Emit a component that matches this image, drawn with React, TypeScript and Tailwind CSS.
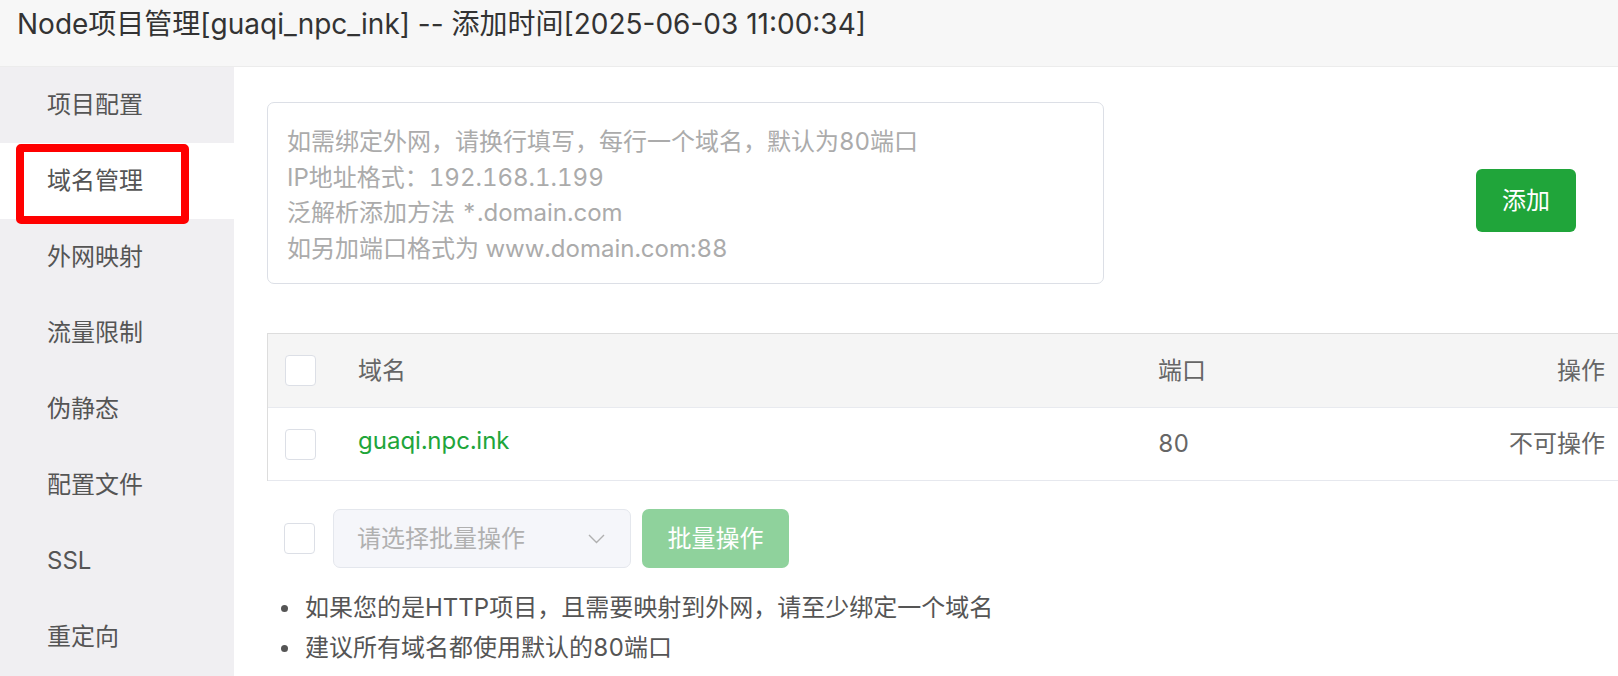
const NAV_ITEMS = ['项目配置', '域名管理', '外网映射', '流量限制', '伪静态', '配置文件', 'SSL', '重定向'];

const PLACEHOLDER = [
  '如需绑定外网，请换行填写，每行一个域名，默认为80端口',
  'IP地址格式：192.168.1.199',
  '泛解析添加方法 *.domain.com',
  '如另加端口格式为 www.domain.com:88',
].join('\n');

function Checkbox() {
  return <span className="block h-[31px] w-[31px] shrink-0 rounded-[4px] border border-[#dcdfe6] bg-white" />;
}

export default function App() {
  const active = 1;

  return (
    <div className="relative h-[676px] w-[1618px] overflow-hidden bg-white font-['Inter','Noto_Sans_CJK_SC',sans-serif] tabular-nums">
      {/* title bar */}
      <div className="h-[67px] border-b border-[#ececec] bg-[#f7f7f7] pl-[17px] pt-[6px] text-[28px] leading-[36px] text-[#333] normal-nums">
        Node项目管理[guaqi_npc_ink] -- 添加时间[2025-06-03 11:00:34]
      </div>

      <div className="flex h-[609px]">
        {/* side nav */}
        <div className="w-[234px] shrink-0 bg-[#f0eff2]">
          {NAV_ITEMS.map((item, i) => (
            <div
              key={item}
              className={
                i === active
                  ? 'flex h-[76px] items-center bg-white pl-[47px] text-[24px] text-[#555]'
                  : 'flex h-[76px] items-center pl-[47px] text-[24px] text-[#555]'
              }
            >
              {item}
            </div>
          ))}
        </div>

        {/* domain panel */}
        <div className="min-w-0 flex-1 overflow-hidden pl-[33px] pt-[35px]">
          <div className="flex items-start">
            <textarea
              className="h-[182px] w-[837px] resize-none rounded-[7px] border border-[#dcdfe6] bg-white pl-[19px] pt-[21px] text-[24px] leading-[35.5px] text-[#333] tabular-nums outline-none placeholder:text-[#ababab]"
              placeholder={PLACEHOLDER}
            />
            <button className="ml-auto mr-[42px] mt-[67px] h-[63px] w-[100px] rounded-[6px] bg-[#20a53a] text-[24px] text-white">
              添加
            </button>
          </div>

          {/* domain table */}
          <div className="mt-[49px] border-l border-t border-[#dddddd] text-[24px] text-[#666]">
            <div className="flex h-[74px] items-center border-b border-[#e8eaef] bg-[#f5f5f5]">
              <div className="w-[90px] pl-[17px]">
                <Checkbox />
              </div>
              <div className="w-[800px]">域名</div>
              <div className="w-[200px]">端口</div>
              <div className="flex-1 pr-[13px] text-right">操作</div>
            </div>
            <div className="flex h-[73px] items-center border-b border-[#e6e8ee]">
              <div className="w-[90px] pl-[17px]">
                <Checkbox />
              </div>
              <div className="-mt-[6px] w-[800px] text-[#20a53a]">guaqi.npc.ink</div>
              <div className="w-[200px]">80</div>
              <div className="flex-1 pr-[13px] text-right">不可操作</div>
            </div>
          </div>

          {/* batch actions */}
          <div className="mt-[28px] flex items-center">
            <div className="ml-[17px]">
              <Checkbox />
            </div>
            <div className="ml-[18px] flex h-[59px] w-[298px] items-center justify-between rounded-[7px] border border-[#e4e7ed] bg-[#f5f6fa] pl-[23px] pr-[25px] text-[24px] text-[#b0b0b0]">
              <span>请选择批量操作</span>
              <svg width="17" height="10" viewBox="0 0 17 10" fill="none">
                <polyline points="1,1 8.5,8.5 16,1" stroke="#b0b0b0" strokeWidth="1.4" />
              </svg>
            </div>
            <button className="ml-[11px] h-[59px] w-[147px] rounded-[7px] bg-[#8fd29c] text-[24px] text-white">
              批量操作
            </button>
          </div>

          {/* tips */}
          <div className="mt-[20px] text-[24px] leading-[40px] text-[#555]">
            <div className="flex items-center">
              <span className="ml-[14px] h-[7px] w-[7px] rounded-full bg-[#555]" />
              <span className="ml-[17px]">如果您的是HTTP项目，且需要映射到外网，请至少绑定一个域名</span>
            </div>
            <div className="flex items-center">
              <span className="ml-[14px] h-[7px] w-[7px] rounded-full bg-[#555]" />
              <span className="ml-[17px]">建议所有域名都使用默认的80端口</span>
            </div>
          </div>
        </div>
      </div>

      {/* red highlight annotation */}
      <div className="pointer-events-none absolute left-[16px] top-[144px] h-[80px] w-[173px] rounded-[5px] border-[8px] border-[#ff0000]" />
    </div>
  );
}
